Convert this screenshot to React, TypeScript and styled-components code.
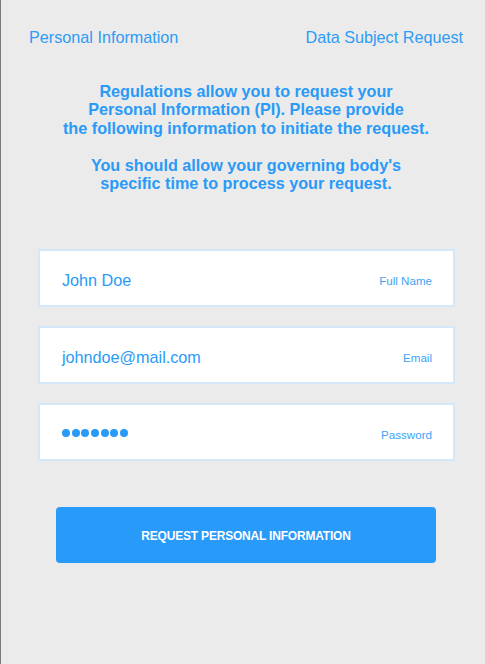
import React from "react";
import styled, { createGlobalStyle } from "styled-components";

const Global = createGlobalStyle`
  html, body { margin: 0; padding: 0; background: #ebebeb; }
  body { font-family: "Liberation Sans", Arial, sans-serif; }
  * { box-sizing: border-box; }
`;

const Page = styled.div`
  width: 485px;
  height: 664px;
  background: #ebebeb;
  border-left: 1px solid #7a7a7a;
  display: flex;
  flex-direction: column;
`;

const Tabs = styled.nav`
  display: flex;
  justify-content: space-between;
  padding: 28px 22px 0 28px;
`;

const Tab = styled.span`
  font-size: 16.2px;
  line-height: 18px;
  color: #2e9bf5;
`;

const Intro = styled.p`
  margin: 36px 0 0;
  text-align: center;
  font-weight: bold;
  font-size: 16.2px;
  line-height: 18.4px;
  color: #2a9af7;
  padding-left: 6px;
`;

const Form = styled.div`
  display: flex;
  flex-direction: column;
  gap: 19px;
  padding: 0 30px 0 37px;
  margin-top: 57px;
`;

const Field = styled.div`
  height: 58px;
  background: #fff;
  border: 2px solid #d4e8fa;
  display: flex;
  align-items: center;
  justify-content: space-between;
  padding: 4px 21px 0 22px;
`;

const Value = styled.span`
  font-size: 16.2px;
  color: #2a9af7;
`;

const Label = styled.span`
  font-size: 11.6px;
  color: #3ea3f6;
`;

const Dots = styled.span`
  display: flex;
  gap: 1.7px;
  margin-top: -3px;
`;

const Dot = styled.span`
  width: 8px;
  height: 8px;
  border-radius: 50%;
  background: #2a9af7;
`;

const Button = styled.button`
  margin: 46px 49px 0 55px;
  height: 56px;
  border: none;
  border-radius: 4px;
  background: #289af9;
  color: #fff;
  font-family: "Liberation Sans", Arial, sans-serif;
  font-weight: bold;
  font-size: 12px;
  letter-spacing: -0.2px;
  padding-top: 2px;
`;

export default function App() {
  return (
    <>
      <Global />
      <Page>
        <Tabs>
          <Tab>Personal Information</Tab>
          <Tab>Data Subject Request</Tab>
        </Tabs>
        <Intro>
          Regulations allow you to request your
          <br />
          Personal Information (PI). Please provide
          <br />
          the following information to initiate the request.
          <br />
          <br />
          You should allow your governing body's
          <br />
          specific time to process your request.
        </Intro>
        <Form>
          <Field>
            <Value>John Doe</Value>
            <Label>Full Name</Label>
          </Field>
          <Field>
            <Value>johndoe@mail.com</Value>
            <Label>Email</Label>
          </Field>
          <Field>
            <Dots>
              {Array.from({ length: 7 }).map((_, i) => (
                <Dot key={i} />
              ))}
            </Dots>
            <Label>Password</Label>
          </Field>
        </Form>
        <Button>REQUEST PERSONAL INFORMATION</Button>
      </Page>
    </>
  );
}
